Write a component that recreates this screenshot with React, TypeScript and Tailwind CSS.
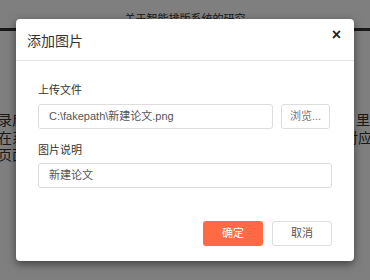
import React from "react";

const font = { fontFamily: '"Liberation Sans", "Noto Sans CJK SC", sans-serif' };

export default function App() {
  return (
    <div className="relative w-[370px] h-[280px] overflow-hidden bg-white text-[#333]" style={font}>
      {/* background page */}
      <div className="flex flex-col">
        <div className="h-[28px] pt-[11px] text-center text-[11px] leading-[16px]">关于智能排版系统的研究</div>
        <div className="h-[3px] bg-[#333]"></div>
        <div className="flex justify-between mt-[81px] text-[14px] leading-[17.5px]">
          <div className="ml-[-2px]">
            <p>录启</p>
            <p>在系</p>
            <p>页面</p>
          </div>
          <div className="w-[20px]">
            <p className="pl-[6px]">里</p>
            <p className="ml-[-6px] whitespace-nowrap">对应</p>
          </div>
        </div>
      </div>

      {/* overlay */}
      <div className="absolute inset-0 bg-black/50"></div>

      {/* modal */}
      <div className="absolute left-[16px] top-[19px] w-[338px] h-[242px] bg-white rounded-[4px] shadow-[0_3px_9px_rgba(0,0,0,0.5)] flex flex-col">
        <div className="h-[42px] border-b border-[#e5e5e5] flex items-start justify-between pl-[11px] pr-[13px]">
          <h4 className="text-[14px] leading-[20px] mt-[12px] text-[#333]">添加图片</h4>
          <button className="text-[16px] font-bold leading-none mt-[8px] text-[#222]">×</button>
        </div>
        <div className="flex flex-col px-[22px] pt-[21px]">
          <label className="text-[11px] leading-[16px] text-[#333]">上传文件</label>
          <div className="flex gap-[8px] mt-[6px]">
            <div className="w-[235px] h-[25px] border border-[#ddd] rounded-[3px] flex items-center pl-[10px] text-[11px] text-[#555]">C:\fakepath\新建论文.png</div>
            <button className="w-[49px] h-[25px] border border-[#ddd] rounded-[3px] text-[11px] text-[#777] flex items-center justify-center">浏览...</button>
          </div>
          <label className="text-[11px] leading-[16px] text-[#333] mt-[13px]">图片说明</label>
          <div className="w-[294px] h-[25px] border border-[#ddd] rounded-[3px] flex items-center pl-[10px] text-[11px] text-[#555] mt-[5px]">新建论文</div>
        </div>
        <div className="flex justify-end gap-[9px] px-[22px] mt-auto mb-[15px]">
          <button className="w-[60px] h-[25px] rounded-[3px] bg-[#ff6a45] text-white text-[11px] flex items-center justify-center">确定</button>
          <button className="w-[60px] h-[25px] rounded-[3px] border border-[#ddd] text-[#555] text-[11px] flex items-center justify-center">取消</button>
        </div>
      </div>
    </div>
  );
}
